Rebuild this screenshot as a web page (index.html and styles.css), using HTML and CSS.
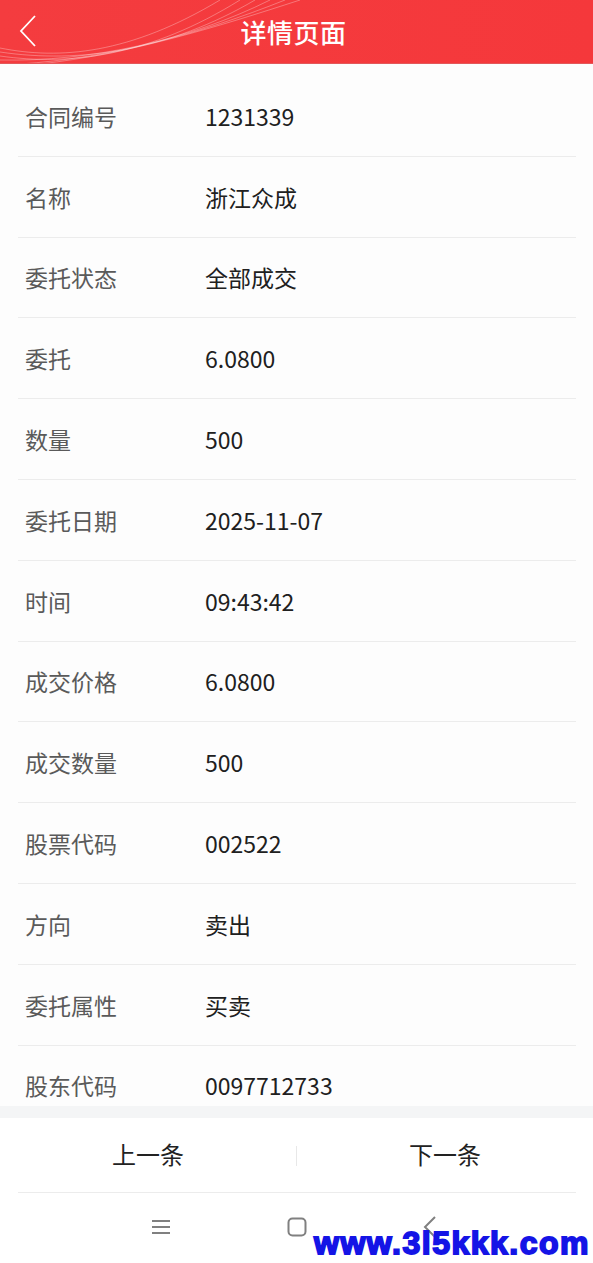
FILE: index.html
```html
<!DOCTYPE html>
<html lang="zh-CN">
<head>
    <meta charset="UTF-8">
    <meta name="viewport" content="width=device-width, initial-scale=1.0">
    <title>详情页面</title>
    <link rel="stylesheet" href="styles.css">
</head>
<body>
    <div class="page">
        <header class="topbar">
            <svg class="topbar-lines" width="593" height="64" viewBox="0 0 593 64">
                <path d="M0 56 C 70 66, 150 56, 240 0" />
                <path d="M0 52 C 80 64, 170 50, 255 0" />
                <path d="M0 60 C 90 62, 190 40, 270 0" />
                <path d="M20 64 C 110 58, 200 34, 285 0" />
                <path d="M0 48 C 60 60, 130 54, 220 0" />
                <path d="M40 64 C 130 54, 220 26, 300 0" />
            </svg>
            <a class="back" href="#">
                <svg width="20" height="34" viewBox="0 0 20 34">
                    <path d="M17 2 L3 17 L17 32" />
                </svg>
            </a>
            <h1>详情页面</h1>
        </header>

        <div class="detail-list">
            <div class="row"><span class="label">合同编号</span><span class="value">1231339</span></div>
            <div class="row"><span class="label">名称</span><span class="value">浙江众成</span></div>
            <div class="row"><span class="label">委托状态</span><span class="value">全部成交</span></div>
            <div class="row"><span class="label">委托</span><span class="value">6.0800</span></div>
            <div class="row"><span class="label">数量</span><span class="value">500</span></div>
            <div class="row"><span class="label">委托日期</span><span class="value">2025-11-07</span></div>
            <div class="row"><span class="label">时间</span><span class="value">09:43:42</span></div>
            <div class="row"><span class="label">成交价格</span><span class="value">6.0800</span></div>
            <div class="row"><span class="label">成交数量</span><span class="value">500</span></div>
            <div class="row"><span class="label">股票代码</span><span class="value">002522</span></div>
            <div class="row"><span class="label">方向</span><span class="value">卖出</span></div>
            <div class="row"><span class="label">委托属性</span><span class="value">买卖</span></div>
            <div class="row"><span class="label">股东代码</span><span class="value">0097712733</span></div>
        </div>

        <div class="pager">
            <button type="button">上一条</button>
            <span class="pager-sep"></span>
            <button type="button">下一条</button>
        </div>

        <nav class="sysnav">
            <svg width="20" height="16" viewBox="0 0 20 16">
                <path d="M1 2 H19 M1 8 H19 M1 14 H19" />
            </svg>
            <svg width="20" height="20" viewBox="0 0 20 20">
                <rect x="1.5" y="1.5" width="17" height="17" rx="4" />
            </svg>
            <svg width="14" height="22" viewBox="0 0 14 22">
                <path d="M12 1 L2 11 L12 21" />
            </svg>
            <div class="watermark">www.3l5kkk.com</div>
        </nav>
    </div>
</body>
</html>
```

FILE: styles.css
```css
body {
    margin: 0;
    padding: 0;
    background-color: #fdfdfd;
    font-family: "Noto Sans CJK SC", "Noto Sans", sans-serif;
}
.page {
    width: 593px;
    height: 1263px;
    display: flex;
    flex-direction: column;
    overflow: hidden;
}
.topbar {
    position: relative;
    height: 63px;
    flex-shrink: 0;
    background: linear-gradient(90deg, #f43c3f, #f5383b);
    border-bottom: 1px solid #e2585a;
    display: flex;
    align-items: center;
    justify-content: center;
    overflow: hidden;
}
.topbar-lines {
    position: absolute;
    left: 0;
    top: 0;
}
.topbar-lines path {
    fill: none;
    stroke: rgba(255, 255, 255, 0.3);
    stroke-width: 1;
}
.back {
    position: absolute;
    left: 18px;
    top: 14px;
}
.back path {
    fill: none;
    stroke: #ffffff;
    stroke-width: 1.8;
}
.topbar h1 {
    margin: 0 0 0 -6px;
    color: #ffffff;
    font-size: 26px;
    font-weight: 500;
    letter-spacing: 0.5px;
}
.detail-list {
    flex: 1;
    min-height: 0;
    overflow: hidden;
    padding: 12px 17px 0 18px;
}
.row {
    height: 79.8px;
    border-bottom: 1px solid #ececec;
    display: flex;
    align-items: center;
    font-size: 23px;
}
.label {
    width: 180px;
    padding-left: 7px;
    color: #5a5a5a;
}
.value {
    color: #202020;
}
.pager {
    flex-shrink: 0;
    border-top: 12px solid #f4f5f6;
    height: 75px;
    display: flex;
    align-items: center;
    background: #ffffff;
    position: relative;
}
.pager::after {
    content: "";
    position: absolute;
    left: 18px;
    right: 17px;
    bottom: 0;
    border-bottom: 1px solid #ececec;
}
.pager button {
    flex: 1;
    height: 100%;
    padding: 0 0 5px;
    background: none;
    border: none;
    font-family: inherit;
    font-size: 24px;
    color: #222222;
    cursor: pointer;
}
.pager-sep {
    width: 1px;
    height: 20px;
    background: #e8e8e8;
}
.sysnav {
    flex-shrink: 0;
    height: 70px;
    position: relative;
    display: flex;
    align-items: center;
    justify-content: center;
    gap: 116px;
    padding: 0 6px 2px 0;
    box-sizing: border-box;
    background: #ffffff;
}
.sysnav path, .sysnav rect {
    fill: none;
    stroke: #808080;
    stroke-width: 2;
}
.watermark {
    position: absolute;
    right: 3px;
    bottom: 0;
    color: #1414e6;
    font-family: "Liberation Sans", Arial, sans-serif;
    font-weight: bold;
    font-size: 32px;
    letter-spacing: 1.5px;
    -webkit-text-stroke: 1.8px #1414e6;
    line-height: 40px;
}
```
